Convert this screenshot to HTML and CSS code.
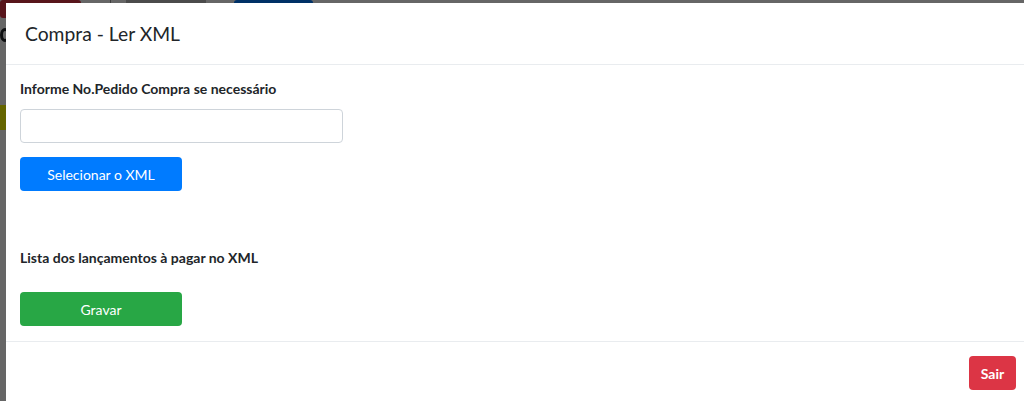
FILE: index.html
```html
<!DOCTYPE html>
<html>
<head>
    <link rel="stylesheet" href="styles.css">
</head>
<body>
    <div class="page">
        <div class="topbar">
            <span class="badge badge-red"></span>
            <span class="sep"></span>
            <span class="topbar-text"></span>
            <span class="badge badge-blue"></span>
        </div>
        <div class="page-mark"></div>
        <div class="yellow-bar"></div>
    </div>

    <div class="backdrop"></div>

    <div class="modal">
        <div class="modal-header">
            <h5 class="modal-title">Compra - Ler XML</h5>
        </div>
        <div class="modal-body">
            <label class="field-label" for="pedido">Informe No.Pedido Compra se necessário</label>
            <input type="text" id="pedido" class="form-control">
            <button type="button" class="btn btn-primary">Selecionar o XML</button>

            <p class="field-label list-label">Lista dos lançamentos à pagar no XML</p>
            <button type="button" class="btn btn-success">Gravar</button>
        </div>
        <div class="modal-footer">
            <button type="button" class="btn btn-danger btn-small">Sair</button>
        </div>
    </div>
</body>
</html>
```

FILE: styles.css
```css
body {
    margin: 0;
    font-family: 'Lato', 'Liberation Sans', sans-serif;
    font-size: 14px;
    color: #212529;
    background-color: #fff;
    overflow: hidden;
}

/* page behind the modal */
.page {
    height: 401px;
}

.topbar {
    display: flex;
    align-items: flex-start;
    height: 22px;
}

.badge {
    height: 18px;
    border-radius: 3px;
}

.badge-red {
    width: 81px;
    background-color: #dc3545;
}

.badge-blue {
    width: 79px;
    margin-left: 28px;
    background-color: #007bff;
}

.sep {
    width: 1px;
    height: 22px;
    margin-left: 29px;
    background-color: #999;
}

.topbar-text {
    width: 80px;
    height: 3px;
    margin-left: 15px;
    background-color: #bbb;
}

.page-mark {
    width: 10px;
    height: 14px;
    margin-top: 6px;
    border: 3px solid #212529;
    border-radius: 50%;
    box-sizing: border-box;
}

.yellow-bar {
    height: 25px;
    margin-top: 63px;
    background-color: #ffff00;
}

.backdrop {
    position: fixed;
    inset: 0;
    background-color: rgba(0, 0, 0, 0.6);
}

/* modal */
.modal {
    position: fixed;
    top: 3px;
    left: 6px;
    width: 1025px;
    height: 420px;
    background-color: #fff;
}

.modal-header {
    padding: 16px 19px 15px;
    border-bottom: 1px solid #e9ecef;
}

.modal-title {
    margin: 0;
    font-size: 19.3px;
    font-weight: normal;
    line-height: 30px;
}

.modal-body {
    display: flex;
    flex-direction: column;
    align-items: flex-start;
    padding: 13px 14px 15px;
}

.field-label {
    margin: 0 0 10px;
    font-weight: bold;
    line-height: 21px;
}

.form-control {
    box-sizing: border-box;
    width: 323px;
    height: 34px;
    margin: 0 0 14px;
    border: 1px solid #ced4da;
    border-radius: 4px;
    font: inherit;
}

.btn {
    box-sizing: border-box;
    width: 162px;
    height: 34px;
    border: none;
    border-radius: 4px;
    font-family: inherit;
    font-size: 14px;
    color: #fff;
}

.btn-primary {
    background-color: #007bff;
}

.list-label {
    margin-top: 56px;
    margin-bottom: 24px;
}

.btn-success {
    background-color: #28a745;
}

.modal-footer {
    display: flex;
    justify-content: flex-end;
    padding: 14px 15px;
    border-top: 1px solid #e9ecef;
}

.btn-danger {
    background-color: #dc3545;
}

.btn-small {
    width: 47px;
    font-weight: bold;
}
```
